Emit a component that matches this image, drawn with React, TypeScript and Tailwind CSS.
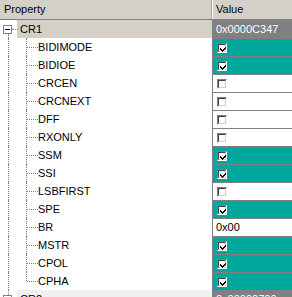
import React from 'react';

type Field = { name: string; value: boolean | string };

const FIELDS: Field[] = [
  { name: 'BIDIMODE', value: true },
  { name: 'BIDIOE', value: true },
  { name: 'CRCEN', value: false },
  { name: 'CRCNEXT', value: false },
  { name: 'DFF', value: false },
  { name: 'RXONLY', value: false },
  { name: 'SSM', value: true },
  { name: 'SSI', value: true },
  { name: 'LSBFIRST', value: false },
  { name: 'SPE', value: true },
  { name: 'BR', value: '0x00' },
  { name: 'MSTR', value: true },
  { name: 'CPOL', value: true },
  { name: 'CPHA', value: true },
];

function CheckBox({ checked }: { checked: boolean }) {
  return (
    <span className="ml-[4px] mt-[4px] block w-[10px] h-[10px] border-t border-l border-b border-r border-t-[#808080] border-l-[#808080] border-b-white border-r-white">
      <span className="block w-full h-full border-t border-l border-b border-r border-t-[#404040] border-l-[#404040] border-b-[#d4d0c8] border-r-[#d4d0c8] bg-white relative">
        {checked && (
          <svg width="6" height="6" viewBox="0 0 6 6" className="absolute left-[1px] top-[1px]">
            <path d="M0 2h1v1h1v1h1V3h1V2h1V1h1" fill="none" stroke="none" />
            <rect x="0" y="2" width="1" height="2" fill="#000" />
            <rect x="1" y="3" width="1" height="2" fill="#000" />
            <rect x="2" y="4" width="1" height="2" fill="#000" />
            <rect x="3" y="3" width="1" height="2" fill="#000" />
            <rect x="4" y="2" width="1" height="2" fill="#000" />
            <rect x="5" y="1" width="1" height="2" fill="#000" />
          </svg>
        )}
      </span>
    </span>
  );
}

function Expander() {
  return (
    <span className="absolute left-[3px] top-[5px] w-[9px] h-[9px] border border-[#808080] bg-white flex items-center justify-center">
      <span className="block w-[5px] h-px bg-black" />
    </span>
  );
}

function GroupRow({ name, value, bg, last }: { name: string; value: string; bg: string; last?: boolean }) {
  return (
    <div className="flex h-[18px]">
      <div className="relative w-[212px] flex">
        <div className="relative w-[17px] shrink-0">
          <Expander />
          <span className="absolute left-[12px] top-[9px] w-[6px] border-t border-dotted border-[#808080]" />
          {!last && <span className="absolute left-[8px] top-[14px] bottom-0 border-l border-dotted border-[#808080]" />}
          {last && <span className="absolute left-[8px] top-0 h-[5px] border-l border-dotted border-[#808080]" />}
        </div>
        <div className={`flex-1 pl-[3px] leading-[18px] ${bg}`}>{name}</div>
      </div>
      <div className="w-[80px] border-l border-t border-[#808080] bg-[#808080] text-white leading-[17px] pl-[3px]">
        {value}
      </div>
    </div>
  );
}

function FieldRow({ f, last }: { f: Field; last: boolean }) {
  const isText = typeof f.value === 'string';
  const on = f.value === true;
  return (
    <div className="flex h-[18px]">
      <div className="relative w-[212px] flex bg-white">
        <div className="relative w-[17px] shrink-0">
          <span className="absolute left-[8px] top-0 bottom-0 border-l border-dotted border-[#808080]" />
        </div>
        <div className="relative w-[21px] shrink-0">
          <span className={`absolute left-[9px] top-0 border-l border-dotted border-[#808080] ${last ? 'h-[9px]' : 'bottom-0'}`} />
          <span className="absolute left-[10px] top-[9px] w-[11px] border-t border-dotted border-[#808080]" />
        </div>
        <div className="flex-1 leading-[18px]">{f.name}</div>
      </div>
      <div
        className={`w-[80px] border-l border-t border-[#808080] ${
          isText ? 'bg-white' : on ? 'bg-[#00a89c]' : 'bg-white'
        }`}
      >
        {isText ? (
          <span className="block pl-[3px] leading-[17px]">{f.value as string}</span>
        ) : (
          <CheckBox checked={on} />
        )}
      </div>
    </div>
  );
}

export default function App() {
  return (
    <div className="w-[292px] h-[297px] overflow-hidden bg-white text-[11px] text-black font-['Liberation_Sans',Arial,sans-serif]">
      <div className="flex h-[20px] bg-[#d4d0c8] border-b border-[#808080]">
        <div className="w-[212px] pl-[4px] leading-[19px] border-r border-[#a0a0a0]">Property</div>
        <div className="flex-1 pl-[3px] leading-[19px] border-l border-white">Value</div>
      </div>
      <GroupRow name="CR1" value="0x0000C347" bg="bg-[#d4d0c8]" />
      {FIELDS.map((f, i) => (
        <FieldRow key={f.name} f={f} last={i === FIELDS.length - 1} />
      ))}
      <GroupRow name="CR2" value="0x00000700" bg="bg-[#f0f0f0]" last />
    </div>
  );
}
